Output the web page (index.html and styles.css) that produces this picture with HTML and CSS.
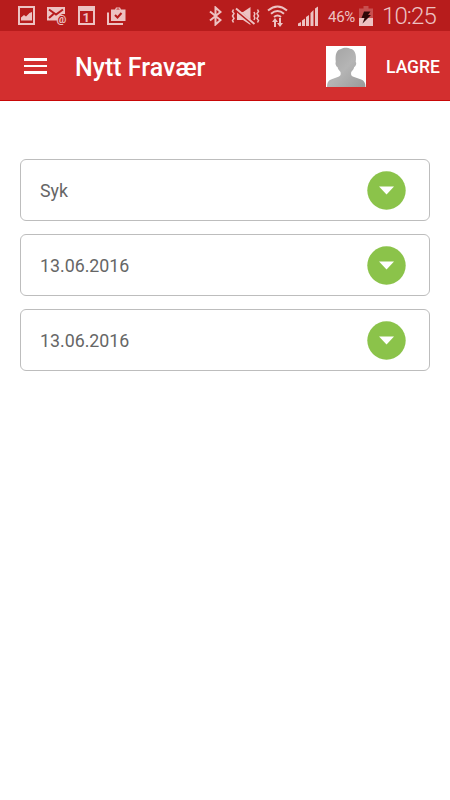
FILE: index.html
```html
<!DOCTYPE html>
<html lang="no">
<head>
    <meta charset="UTF-8">
    <meta name="viewport" content="width=device-width, initial-scale=1.0">
    <title>Nytt Fravær</title>
    <link rel="stylesheet" href="styles.css">
</head>
<body>

    <!-- Status bar -->
    <div class="status-bar">
        <div class="notifications">
            <!-- Picture -->
            <svg width="17" height="19" viewBox="0 0 17 19">
                <path fill-rule="evenodd" d="M0 0h17v19H0zM2 2v15h13V2z"/>
                <path d="M3 14.500v-3l3-2.500 2 1.500L11.500 7l2.500-1v8.500z"/>
            </svg>
            <!-- Mail -->
            <svg width="20" height="18" viewBox="0 0 20 18">
                <path d="M0 0h18v7c-4-.5-7 2-7.500 6.500H0z"/>
                <path class="cut" d="M2 2.500l7 5 7-5M2 11l4.500-4"/>
                <text class="at" x="9.500" y="15.500">@</text>
            </svg>
            <!-- Calendar -->
            <svg class="calendar" width="17" height="19" viewBox="0 0 17 19">
                <path fill-rule="evenodd" d="M0 0h17v19H0zM2 5v12h13V5z"/>
                <text class="day" x="4.500" y="15.800">1</text>
            </svg>
            <!-- Task case -->
            <svg width="19" height="18" viewBox="0 0 19 18">
                <path fill-rule="evenodd" d="M4 2.500h4L9 .5h4l1 2h4.500V14H4zM9.200 2.500h3.600l-.8-1h-2z"/>
                <path class="line" d="M1 5.500V17h15"/>
                <path class="cut" d="M8 8l2.500 2.500 4-4.500"/>
            </svg>
        </div>
        <div class="system">
            <!-- Bluetooth -->
            <svg class="bluetooth" width="13" height="20" viewBox="0 0 13 20">
                <path class="line" d="M1 5.500l10.500 8.500-5 4.500v-17l5 4.500L1 14.500"/>
            </svg>
            <!-- Sound off -->
            <svg class="mute" width="29" height="20" viewBox="0 0 29 20">
                <path d="M6 6h6l7.500-5v18L12 14H6z"/>
                <path class="thin" d="M2.500 3.500l-1 2 1.500 2-1.500 2.500 1.500 2.500-1.500 2 1 2M26.500 3.500l1 2-1.500 2 1.500 2.500-1.500 2.500 1.500 2-1 2"/>
                <path class="thin" d="M23 6l.8 2-.8 2 .8 2-.8 2"/>
                <path class="slash-gap" d="M6 4.500l18 15"/>
                <path class="line" d="M5 2.500l18.500 15.500"/>
            </svg>
            <!-- Wifi -->
            <svg class="wifi" width="21" height="22" viewBox="0 0 21 22">
                <path class="line" d="M1 5.500q9.500-8 19 0M4 8.800q6.500-5.500 13 0M7 12q3.500-3 7 0"/>
                <path d="M8 13l3 4H9v5H7v-5H5zM12 13h2v5h2l-3 4-3-4h2z"/>
            </svg>
            <!-- Signal -->
            <svg class="signal" width="20" height="20" viewBox="0 0 20 20">
                <path d="M0 17.500l3-1.500v4H0zM4 14.500l3-2V20H4zM8 11l3-2v11H8zM12.500 7l3-3v16h-3zM17 2.500l3-2V20h-3z"/>
            </svg>
            <span class="percent">46%</span>
            <!-- Battery -->
            <svg class="battery" width="14" height="20" viewBox="0 0 14 20">
                <path class="battery-empty" d="M4.500 0h5v2.500H14V12H0V2.500h4.500z"/>
                <path d="M0 12h14v8H0z"/>
                <path class="bolt" d="M5 5.500h6.500L9 9h3l-8.500 8.500L5.500 12H2.500z"/>
            </svg>
            <span class="clock">10:25</span>
        </div>
    </div>

    <!-- Header section -->
    <header>
        <button class="menu" aria-label="Meny">
            <span></span>
            <span></span>
            <span></span>
        </button>
        <h1>Nytt Fravær</h1>
        <svg class="avatar" width="40" height="41" viewBox="0 0 40 41">
            <defs>
                <linearGradient id="shade" x1="0" y1="0" x2="1" y2="1">
                    <stop offset="0" stop-color="#a0a0a0"/>
                    <stop offset=".5" stop-color="#b5b5b5"/>
                    <stop offset="1" stop-color="#999"/>
                </linearGradient>
            </defs>
            <path fill="#fff" d="M0 0h40v41H0z"/>
            <path fill="url(#shade)" d="M1 41c0-4 1-6.500 4-7.500l8-3c1.500-.8 2-2 1.500-4.500-1.500-1.500-2.500-3-3-5-1.500-.5-2.500-4-1.700-5C9 8 10.500 4 15 3c3-2 7-1.500 9-.3 4.500.3 7 5.300 5.700 13.300 1.300 1 0 4.500-1.500 5-.4 2-1.500 3.500-3 5-.4 2.500 0 3.800 1.500 4.500l8.500 3c3 1 4.300 3.500 4.300 7.500z"/>
        </svg>
        <button class="save">LAGRE</button>
    </header>

    <!-- Absence form -->
    <main>
        <button class="field">
            <span>Syk</span>
            <svg width="39" height="39" viewBox="0 0 39 39">
                <circle cx="19.500" cy="19.500" r="19.200"/>
                <path d="M12 15.500h15l-7.500 8z"/>
            </svg>
        </button>
        <button class="field">
            <span>13.06.2016</span>
            <svg width="39" height="39" viewBox="0 0 39 39">
                <circle cx="19.500" cy="19.500" r="19.200"/>
                <path d="M12 15.500h15l-7.500 8z"/>
            </svg>
        </button>
        <button class="field">
            <span>13.06.2016</span>
            <svg width="39" height="39" viewBox="0 0 39 39">
                <circle cx="19.500" cy="19.500" r="19.200"/>
                <path d="M12 15.500h15l-7.500 8z"/>
            </svg>
        </button>
    </main>

</body>
</html>
```

FILE: styles.css
```css
* {
    box-sizing: border-box;
}

/* General styles for the body */
body {
    margin: 0;
    min-height: 100vh;
    background-color: #fff;
    font-family: Roboto, sans-serif;
}

button {
    margin: 0;
    padding: 0;
    border: none;
    background: none;
    font-family: inherit;
}

/* Status bar */
.status-bar {
    display: flex;
    justify-content: space-between;
    height: 31px;
    padding: 0 14px 0 18px;
    background-color: #b71c1c;
    color: #edc2c2;
}

.status-bar svg {
    flex-shrink: 0;
    fill: #edc2c2;
}

.notifications,
.system {
    display: flex;
    align-items: center;
}

.notifications {
    gap: 12px;
}

.calendar {
    margin-left: -1px;
}

.status-bar .line {
    fill: none;
    stroke: #edc2c2;
    stroke-width: 2;
}

.status-bar .thin {
    fill: none;
    stroke: #edc2c2;
    stroke-width: 1.5;
}

.status-bar .cut {
    fill: none;
    stroke: #b71c1c;
    stroke-width: 2;
}

.status-bar .slash-gap {
    fill: none;
    stroke: #b71c1c;
    stroke-width: 3;
}

.at {
    font-size: 11px;
    font-weight: 700;
}

.day {
    font-size: 13px;
    font-weight: 700;
}

.bluetooth {
    margin-right: 1px;
}

.mute {
    margin-left: 8px;
}

.wifi {
    margin-left: 7px;
}

.signal {
    margin-left: 10px;
}

.percent {
    width: 28px;
    margin: 2px 3px 0 10px;
    font-size: 15px;
    letter-spacing: -0.3px;
}

.status-bar .battery-empty {
    fill: #c85050;
}

.status-bar .bolt {
    fill: #300808;
}

.clock {
    width: 54px;
    margin: 2px 0 0 9px;
    font-size: 24px;
    font-weight: 300;
    line-height: 27px;
    letter-spacing: -0.9px;
}

/* Header section */
header {
    display: flex;
    align-items: center;
    height: 70px;
    padding: 1px 10px 0 24px;
    background-color: #d32f2f;
    border-bottom: 1px solid #c80808;
    color: #fff;
}

.menu {
    display: flex;
    flex-direction: column;
    gap: 4px;
    width: 23px;
}

.menu span {
    width: 23px;
    height: 2.500px;
    background-color: #fff;
}

header h1 {
    flex-grow: 1;
    margin: 3px 0 0 28px;
    font-size: 25px;
    font-weight: 500;
}

.save {
    width: 54px;
    margin: 1px 0 0 20px;
    color: #fff;
    font-size: 17.500px;
    font-weight: 500;
    white-space: nowrap;
}

/* Form fields */
main {
    display: flex;
    flex-direction: column;
    gap: 13px;
    padding: 58px 20px 0;
}

.field {
    display: flex;
    justify-content: space-between;
    align-items: center;
    height: 62px;
    padding: 0 23px 0 19px;
    border: 1px solid #bdbdbd;
    border-radius: 6px;
    color: #666;
    font-size: 17.800px;
    text-align: left;
}

.field circle {
    fill: #8bc34a;
}

.field path {
    fill: #fff;
}
```
